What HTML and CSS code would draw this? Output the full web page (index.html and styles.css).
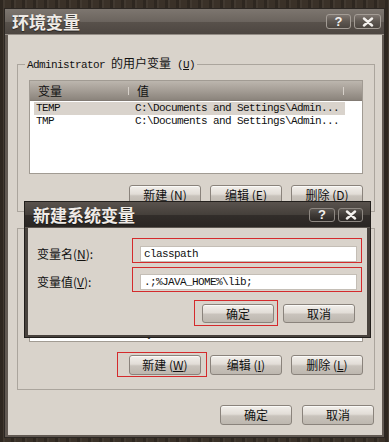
FILE: index.html
```html
<!DOCTYPE html>
<html lang="zh-CN">
<head>
  <meta charset="UTF-8" />
  <title>环境变量</title>
  <link rel="stylesheet" href="styles.css">
</head>
<body>
  <div class="window">
    <div class="titlebar">
      <span class="title">环境变量</span>
      <span class="caps">
        <span class="cap cap-help">?</span>
        <span class="cap cap-close"><svg width="12" height="10" viewBox="0 0 12 10"><path d="M2 1.5 L10 8.5 M10 1.5 L2 8.5" stroke="#f4f1ee" stroke-width="2.4" stroke-linecap="round"/></svg></span>
      </span>
    </div>

    <div class="client">
      <fieldset class="group group-user">
        <legend>Administrator <span class="cjk">的用户变量</span> (<u>U</u>)</legend>
        <div class="group-body">
          <div class="list list-user">
            <div class="list-head">
              <span class="col-name">变量</span><i class="sep"></i>
              <span class="col-value">值</span><i class="sep"></i>
            </div>
            <div class="rows">
              <div class="row sel"><span class="cell-name">TEMP</span><span>C:\Documents and Settings\Admin...</span></div>
              <div class="row"><span class="cell-name">TMP</span><span>C:\Documents and Settings\Admin...</span></div>
            </div>
          </div>
          <div class="buttons">
            <button class="btn">新建 (<u>N</u>)</button>
            <button class="btn">编辑 (<u>E</u>)</button>
            <button class="btn">删除 (<u>D</u>)</button>
          </div>
        </div>
      </fieldset>

      <!-- system variables group: mostly covered by the dialog -->
      <div class="group group-sys">
        <div class="group-body">
          <div class="list list-sys">
            <div class="list-head"></div>
            <div class="rows">
              <div class="row"><span class="cell-name">TT</span><span>%SystemRoot%</span></div>
            </div>
          </div>
          <div class="buttons">
            <button class="btn mark mark-new">新建 (<u>W</u>)</button>
            <button class="btn">编辑 (<u>I</u>)</button>
            <button class="btn">删除 (<u>L</u>)</button>
          </div>
        </div>
      </div>

      <div class="buttons footer">
        <button class="btn">确定</button>
        <button class="btn">取消</button>
      </div>
    </div>
  </div>

  <div class="dialog">
    <div class="titlebar dialog-titlebar">
      <span class="title">新建系统变量</span>
      <span class="caps">
        <span class="cap cap-help">?</span>
        <span class="cap cap-close"><svg width="12" height="10" viewBox="0 0 12 10"><path d="M2 1.5 L10 8.5 M10 1.5 L2 8.5" stroke="#f4f1ee" stroke-width="2.4" stroke-linecap="round"/></svg></span>
      </span>
    </div>
    <div class="dialog-client">
      <div class="form">
        <label class="label">变量名(<u>N</u>):</label>
        <span class="field mark mark-name"><input class="input" type="text" value="classpath" readonly></span>
        <label class="label">变量值(<u>V</u>):</label>
        <span class="field mark mark-value"><input class="input" type="text" value=".;%JAVA_HOME%\lib;" readonly></span>
      </div>
      <div class="buttons dialog-buttons">
        <button class="btn mark mark-ok">确定</button>
        <button class="btn">取消</button>
      </div>
    </div>
  </div>
</body>
</html>
```

FILE: styles.css
```css
body {
  margin: 0;
  width: 389px;
  height: 442px;
  overflow: hidden;
  position: relative;
  background-color: #3a3128;
  background-image: repeating-linear-gradient(90deg, rgba(0, 0, 0, 0.2) 0 3px, rgba(255, 255, 255, 0.04) 3px 5px, transparent 5px 11px);
  font-family: "Noto Sans CJK SC", "Liberation Sans", sans-serif;
  font-size: 12px;
  color: #111;
}

u {
  text-decoration: underline;
}

/* main window */
.window {
  margin: 8px 0 0 4px;
  width: 381px;
  box-sizing: border-box;
  border: 1px solid #2c2723;
  background: #625a53;
  padding: 0 2px 2px 3px;
}

.titlebar {
  margin: 0 -2px 0 -3px;
  height: 26px;
  padding: 0 3px 0 7px;
  display: flex;
  align-items: center;
  justify-content: space-between;
  background: linear-gradient(#7d766f, #6b645e 50%, #58514b 52%, #4d4641);
  border-bottom: 1px solid #948d86;
  box-sizing: border-box;
}

.title {
  font-size: 17px;
  font-weight: 700;
  line-height: 20px;
  color: #efebe7;
  text-shadow: 0 1px 1px rgba(0, 0, 0, 0.5);
}

.caps {
  display: flex;
  gap: 3px;
}

.cap {
  height: 15px;
  box-sizing: border-box;
  border: 1px solid #a39c95;
  border-radius: 3px;
  background: linear-gradient(#7e7670, #5e5751 50%, #4b4540);
  display: flex;
  align-items: center;
  justify-content: center;
  color: #f4f1ee;
  font-family: "Liberation Sans", sans-serif;
  font-weight: 700;
  font-size: 13px;
  line-height: 13px;
}

.cap-help {
  width: 25px;
}

.cap-close {
  width: 27px;
}

.client {
  height: 400px;
  box-sizing: border-box;
  background: #d9d3cb;
  padding: 21px 7px 0 9px;
  display: flex;
  flex-direction: column;
}

/* group boxes */
.group {
  margin: 0;
  padding: 0;
  min-width: 0;
  border: 1px solid #aba59d;
}

.group-sys {
  margin-top: 16px;
}

.group legend {
  margin-left: 7px;
  padding: 0 2px;
  font-family: "Liberation Mono", "Noto Sans CJK SC", monospace;
  font-size: 11px;
  letter-spacing: -0.6px;
  line-height: 14px;
  color: #111;
}

.cjk {
  font-family: "Noto Sans CJK SC", sans-serif;
  font-size: 12px;
  letter-spacing: 0;
}

.group-body {
  padding: 8px 11px 6px 11px;
}

.group-sys .group-body {
  padding: 14px 11px 14px 11px;
}

.list {
  height: 94px;
  box-sizing: border-box;
  border: 1px solid #a19b93;
  background: #fff;
  overflow: hidden;
  display: flex;
  flex-direction: column;
}

.list-sys {
  height: 99px;
}

.list-sys .rows {
  margin-top: auto;
}

.list-head {
  height: 20px;
  flex: none;
  box-sizing: border-box;
  display: flex;
  align-items: center;
  background: linear-gradient(#bcb6ae, #a29b93 55%, #8b847c);
  border-bottom: 1px solid #827b74;
  font-size: 12px;
  line-height: 14px;
}

.col-name {
  width: 90px;
  padding-left: 8px;
}

.col-value {
  width: 206px;
  padding-left: 8px;
}

.sep {
  width: 1px;
  height: 8px;
  background: #d6d0c9;
}

.rows {
  padding-top: 1px;
}

.row {
  margin-left: 4px;
  width: 311px;
  height: 13px;
  padding-left: 2px;
  box-sizing: border-box;
  display: flex;
  font-family: "Liberation Mono", monospace;
  font-size: 11px;
  letter-spacing: -0.6px;
  line-height: 13px;
  white-space: nowrap;
  color: #111;
}

.row.sel {
  background: #d9d3cc;
}

.cell-name {
  width: 99px;
  flex: none;
  overflow: hidden;
}

/* buttons */
.buttons {
  display: flex;
  justify-content: flex-end;
  gap: 9px;
  margin-top: 11px;
}

.group-sys .buttons {
  margin-top: 13px;
}

.btn {
  width: 72px;
  height: 20px;
  padding: 0;
  box-sizing: border-box;
  border: 1px solid #8a837c;
  border-radius: 3px;
  background: linear-gradient(#f2efeb, #e2ddd7 45%, #c9c3bc 55%, #bdb7af);
  box-shadow: inset 0 1px 0 #fbfaf8;
  font-family: "Noto Sans CJK SC", sans-serif;
  font-size: 12px;
  line-height: 14px;
  color: #111;
  display: flex;
  align-items: center;
  justify-content: center;
}

.footer {
  margin-top: 15px;
  margin-right: 1px;
  gap: 10px;
}

/* red highlight marks drawn over the controls */
.mark {
  position: relative;
}

.mark::after {
  content: '';
  position: absolute;
  border: 1px solid #d42a2c;
  pointer-events: none;
}

.mark-new::after {
  inset: -4px -7px -3px -13px;
}

.mark-ok::after {
  inset: -5px -5px -4px -9px;
}

.mark-name::after {
  inset: -8px -5px -1px -8px;
}

.mark-value::after {
  inset: -7px -5px -2px -8px;
}

/* dialog on top */
.dialog {
  position: absolute;
  left: 24px;
  top: 201px;
  width: 347px;
  box-sizing: border-box;
  border: 1px solid #221f1c;
  background: #48423d;
  padding: 0 3px 2px 3px;
}

.dialog-titlebar {
  margin: 0 -3px;
  padding: 0 7px 0 8px;
  background: linear-gradient(#59524d, #45403b 50%, #322d2a 52%, #2a2623);
  border-bottom: 1px solid #5e5852;
}

.dialog-titlebar .cap {
  height: 14px;
  border-color: #8e8882;
  background: linear-gradient(#5b5550, #3f3a36 50%, #2c2825);
}

.dialog-titlebar .cap-help {
  width: 26px;
}

.dialog-titlebar .cap-close {
  width: 25px;
}

.dialog-client {
  height: 107px;
  box-sizing: border-box;
  background: #d9d3cb;
  padding: 18px 10px 0 9px;
}

.form {
  display: grid;
  grid-template-columns: 103px 217px;
  row-gap: 12px;
  align-items: center;
}

.label {
  font-size: 12px;
  line-height: 14px;
  color: #111;
}

.field {
  display: block;
  height: 16px;
}

.input {
  display: block;
  width: 100%;
  height: 16px;
  margin: 0;
  box-sizing: border-box;
  border: 1px solid #c4beb6;
  background: #fff;
  padding: 0 0 0 3px;
  font-family: "Liberation Mono", monospace;
  font-size: 11px;
  letter-spacing: -0.6px;
  color: #111;
  outline: none;
}

.dialog-buttons {
  margin-top: 14px;
  margin-right: 2px;
}

.dialog-buttons .btn {
  height: 19px;
}
```
